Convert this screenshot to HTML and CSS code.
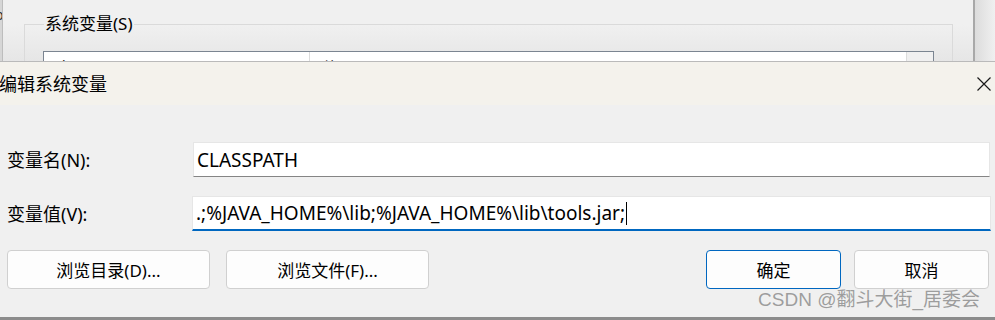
FILE: index.html
```html
<!DOCTYPE html>
<html lang="zh-CN">

<head>
    <meta charset="UTF-8">
    <title>编辑系统变量</title>
    <link rel="stylesheet" href="styles.css">
</head>

<body>
    <div class="screen">
        <!-- parent window behind the dialog -->
        <div class="backdrop">
            <div class="backdrop-main">
                <div class="edge-left">p</div>
                <fieldset class="group">
                    <legend>系统变量(S)</legend>
                    <div class="list">
                        <div class="list-col first">变量</div>
                        <div class="list-col">值</div>
                        <div class="list-scroll"></div>
                    </div>
                </fieldset>
            </div>
            <div class="backdrop-edge"></div>
        </div>

        <!-- dialog -->
        <div class="dialog">
            <div class="titlebar">
                <span class="title">编辑系统变量</span>
                <span class="close">
                    <svg width="16" height="16" viewBox="0 0 16 16">
                        <path d="M1.5 1.5 L14.5 14.5 M14.5 1.5 L1.5 14.5" stroke="#1a1a1a" stroke-width="1.2" fill="none" />
                    </svg>
                </span>
            </div>

            <div class="form">
                <div class="form-row">
                    <label for="varName">变量名(N):</label>
                    <div class="field"><input type="text" id="varName" value="CLASSPATH"></div>
                </div>
                <div class="form-row">
                    <label for="varValue">变量值(V):</label>
                    <div class="field active"><span class="value">.;%JAVA_HOME%\lib;%JAVA_HOME%\lib\tools.jar;</span><span class="caret"></span></div>
                </div>
                <div class="buttons">
                    <div class="btn-group">
                        <button class="btn wide">浏览目录(D)...</button>
                        <button class="btn wide">浏览文件(F)...</button>
                    </div>
                    <div class="btn-group right">
                        <button class="btn primary">确定</button>
                        <button class="btn">取消</button>
                    </div>
                </div>
            </div>
            <div class="bottom-line"></div>
            <div class="watermark">CSDN @翻斗大街_居委会</div>
        </div>
    </div>
</body>

</html>
```

FILE: styles.css
```css
* {
    box-sizing: border-box;
    padding: 0;
    margin: 0;
}

body {
    background: #f0f0f0;
    font-family: "Noto Sans", "Noto Sans CJK SC", sans-serif;
    color: #000;
    overflow: hidden;
}

.screen {
    width: 995px;
    height: 320px;
    position: relative;
    overflow: hidden;
}

/* Backdrop window */
.backdrop {
    height: 61px;
    display: flex;
    background: linear-gradient(#f0f0f0 40%, #e6e6e6);
    overflow: hidden;
}

.backdrop-main {
    width: 973px;
    display: flex;
    align-items: flex-start;
}

.edge-left {
    width: 3px;
    height: 61px;
    background: #d6d6d6;
    border-right: 1px solid #bdbdbd;
    font-size: 14px;
    line-height: 30px;
    color: #333;
    overflow: hidden;
    text-indent: -5px;
}

.group {
    margin-left: 21px;
    margin-top: 14px;
    width: 929px;
    height: 80px;
    border: 1px solid #dadada;
    padding: 0 18px;
}

.group legend {
    font-size: 17px;
    line-height: 20px;
    padding: 0 1px;
    margin-left: 1px;
    color: #000;
}

.list {
    margin-top: 17px;
    height: 40px;
    border: 1px solid #7b8591;
    border-bottom: none;
    background: #fff;
    display: flex;
}

.list-col {
    font-size: 16px;
    line-height: 18px;
    padding: 7px 0 0 12px;
    color: #000;
}

.list-col.first {
    width: 266px;
    border-right: 1px solid #dcdcdc;
}

.list-col:nth-child(2) {
    flex: 1;
}

.list-scroll {
    width: 27px;
    border-left: 1px solid #dcdcdc;
    background: #f0f0f0;
}

.backdrop-edge {
    flex: 1;
    border-left: 2px solid #a8a8a8;
    background: linear-gradient(90deg, #dcdcdc, #f0f0f0);
}

/* Dialog */
.dialog {
    border-top: 1px solid #bababa;
}

.titlebar {
    height: 43px;
    background: #f4f2ec;
    display: flex;
    align-items: center;
    justify-content: space-between;
}

.title {
    font-size: 18px;
    margin-left: -1px;
    margin-top: -1px;
}

.close {
    width: 16px;
    height: 16px;
    margin-right: 3px;
    display: flex;
}

.form {
    padding: 37px 5px 0 7px;
}

.form-row {
    display: flex;
    align-items: center;
    margin-bottom: 19px;
}

.form-row label {
    width: 186px;
    font-size: 18px;
    padding-bottom: 2px;
}

.field {
    flex: 1;
    height: 35px;
    background: #fff;
    border: 1px solid #e6e6e6;
    border-bottom: 1px solid #858585;
    display: flex;
    align-items: center;
    padding-left: 3px;
    font-size: 19px;
}

.field input {
    border: none;
    outline: none;
    background: transparent;
    font: inherit;
    width: 100%;
    color: #000;
}

.field.active {
    margin-left: -1px;
    margin-right: -1px;
    border-bottom: 2px solid #0067c0;
}

.caret {
    display: inline-block;
    width: 1px;
    height: 23px;
    background: #000;
    margin-left: 1px;
}

.buttons {
    display: flex;
    justify-content: space-between;
    margin-top: 6px;
}

.btn-group {
    display: flex;
    gap: 16px;
}

.btn-group.right {
    gap: 13px;
    margin-right: 1px;
}

.btn {
    height: 39px;
    width: 135px;
    background: #fdfdfd;
    border: 1px solid #d0d0d0;
    border-radius: 4px;
    font-family: inherit;
    font-size: 17px;
    color: #000;
}

.btn.wide {
    width: 203px;
}

.btn.primary {
    border-color: #0067c0;
}

.bottom-line {
    position: absolute;
    left: 0;
    right: 0;
    bottom: 0;
    height: 3px;
    background: #8c8c8c;
}

.watermark {
    position: absolute;
    right: 15px;
    bottom: 9px;
    font-family: "Liberation Sans", "Noto Sans CJK SC", sans-serif;
    font-size: 19px;
    color: rgba(120, 120, 120, 0.7);
}
```
